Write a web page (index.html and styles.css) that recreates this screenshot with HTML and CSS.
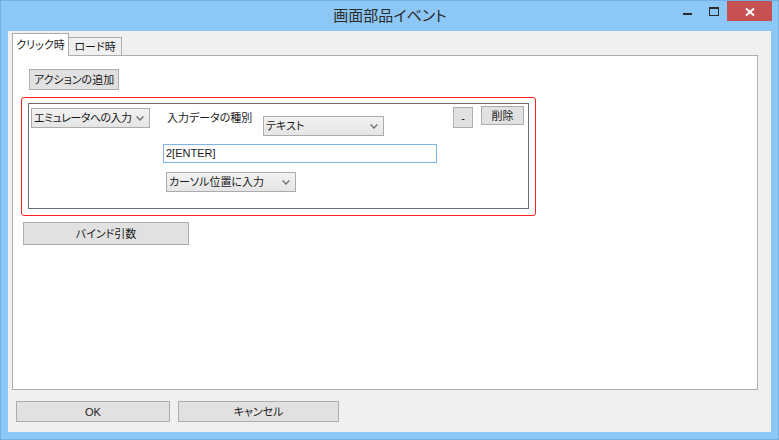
FILE: index.html
```html
<!DOCTYPE html>
<html lang="ja">
<head>
<meta charset="utf-8">
<title>画面部品イベント</title>
<link rel="stylesheet" href="styles.css">
</head>
<body>
<div class="window">
  <div class="titlebar">
    <div class="tb-left"></div>
    <div class="title">画面部品イベント</div>
    <div class="controls">
      <span class="ctl ctl-min"><svg width="26" height="20" viewBox="0 0 26 20"><rect x="9" y="12" width="9" height="2" fill="#2b2b2b"/></svg></span>
      <span class="ctl ctl-max"><svg width="27" height="20" viewBox="0 0 27 20"><rect x="9.5" y="6.5" width="9" height="8" fill="none" stroke="#2b2b2b"/><rect x="9" y="6" width="10" height="2" fill="#2b2b2b"/></svg></span>
      <span class="ctl ctl-close"><svg width="45" height="20" viewBox="0 0 45 20"><path d="M19 7.5 L27 14.5 M27 7.5 L19 14.5" stroke="#fff" stroke-width="2" fill="none"/></svg></span>
    </div>
  </div>
  <div class="client">
    <div class="tabs">
      <div class="tab active">クリック時</div>
      <div class="tab">ロード時</div>
    </div>
    <div class="panel">
      <div class="btn add">アクションの追加</div>
      <div class="action-outer">
        <div class="action-inner">
          <div class="row1">
            <div class="combo c1"><span class="ctext">エミュレータへの入力</span><svg class="arrow" width="8" height="5" viewBox="0 0 8 5"><path d="M0.6 0.6 L4 4 L7.4 0.6" stroke="#707070" stroke-width="1.4" fill="none"/></svg></div>
            <div class="label">入力データの種別</div>
            <div class="combo c2"><span class="ctext">テキスト</span><svg class="arrow" width="8" height="5" viewBox="0 0 8 5"><path d="M0.6 0.6 L4 4 L7.4 0.6" stroke="#707070" stroke-width="1.4" fill="none"/></svg></div>
            <div class="btn minus">-</div>
            <div class="btn del">削除</div>
          </div>
          <div class="textbox">2[ENTER]</div>
          <div class="combo c3"><span class="ctext">カーソル位置に入力</span><svg class="arrow" width="8" height="5" viewBox="0 0 8 5"><path d="M0.6 0.6 L4 4 L7.4 0.6" stroke="#707070" stroke-width="1.4" fill="none"/></svg></div>
        </div>
      </div>
      <div class="btn bind">バインド引数</div>
    </div>
    <div class="footer">
      <div class="btn ok">OK</div>
      <div class="btn cancel">キャンセル</div>
    </div>
  </div>
</div>
</body>
</html>
```
FILE: styles.css
```css
* { box-sizing: border-box; }
html, body { margin: 0; padding: 0; }
body {
  width: 779px;
  height: 440px;
  overflow: hidden;
  font-family: "Liberation Sans", "Noto Sans CJK JP", sans-serif;
  font-size: 11px;
  color: #1a1a1a;
  font-feature-settings: "palt";
}
.window {
  width: 779px;
  height: 440px;
  background: #8dc7f6;
  border: 1px solid #74aee6;
  padding: 0 7px 7px;
  display: flex;
  flex-direction: column;
}
.titlebar {
  height: 30px;
  margin-right: -1px;
  display: grid;
  grid-template-columns: 1fr auto 1fr;
  align-items: center;
}
.title {
  font-size: 15px;
  color: #2b2b2b;
  line-height: 20px;
}
.controls {
  justify-self: end;
  align-self: start;
  display: flex;
}
.ctl { display: block; height: 20px; }
.ctl svg { display: block; }
.ctl-close { background: #c75050; }
.client {
  flex: 1;
  background: #f0f0f0;
  padding: 2px 0 0 4px;
  display: flex;
  flex-direction: column;
  align-items: flex-start;
}
.tabs {
  height: 22px;
  display: flex;
  align-items: flex-end;
  position: relative;
  z-index: 1;
}
.tab {
  height: 18px;
  border: 1px solid #adadad;
  border-bottom: none;
  background: #f0f0f0;
  display: flex;
  align-items: center;
  justify-content: center;
  line-height: 16px;
  width: 54px;
  margin-left: -1px;
}
.tab.active {
  background: #fff;
  height: 23px;
  width: 57px;
  margin-left: 0;
  margin-bottom: -1px;
  padding-bottom: 1px;
  position: relative;
  z-index: 2;
}
.panel {
  width: 746px;
  height: 335px;
  background: #fff;
  border: 1px solid #adadad;
  display: flex;
  flex-direction: column;
  align-items: flex-start;
}
.btn {
  background: #e1e1e1;
  border: 1px solid #adadad;
  display: flex;
  align-items: center;
  justify-content: center;
  line-height: 14px;
  white-space: nowrap;
}
.add { margin: 13px 0 0 16px; width: 90px; height: 21px; }
.action-outer {
  margin: 7px 0 0 8px;
  width: 515px;
  height: 119px;
  border: 1px solid #ff2020;
  border-radius: 3px;
  padding: 5px 6px 6px;
}
.action-inner {
  width: 501px;
  height: 106px;
  border: 1px solid #6d6d6d;
  padding: 3px 4px 0 2px;
  display: flex;
  flex-direction: column;
  align-items: flex-start;
}
.row1 {
  align-self: stretch;
  height: 28px;
  display: flex;
  align-items: flex-start;
  padding-top: 1px;
}
.combo {
  height: 20px;
  background: linear-gradient(#f2f2f2, #e5e5e5);
  border: 1px solid #acacac;
  display: flex;
  align-items: center;
  padding-left: 2px;
  white-space: nowrap;
}
.ctext { line-height: 14px; }
.arrow { margin-left: auto; margin-right: 5px; display: block; flex: none; }
.c1 { width: 119px; }
.c1 .ctext { letter-spacing: -0.5px; }
.label { margin-left: 17px; width: 96px; height: 20px; line-height: 20px; white-space: nowrap; }
.c2 { width: 121px; margin-top: 8px; }
.minus { margin-left: auto; margin-top: -1px; width: 20px; height: 21px; }
.del { margin-left: 8px; margin-top: -2px; width: 43px; height: 19px; }
.textbox {
  margin: 9px 0 0 132px;
  width: 274px;
  height: 19px;
  border: 1px solid #7eb4ea;
  background: #fff;
  font-size: 11px;
  line-height: 17px;
  padding-left: 2px;
}
.c3 { width: 130px; margin: 9px 0 0 135px; padding-left: 2px; }
.bind { margin: 6px 0 0 10px; width: 166px; height: 23px; }
.footer {
  display: flex;
  margin: 11px 0 0 4px;
}
.ok { width: 154px; height: 21px; }
.cancel { width: 161px; height: 21px; margin-left: 8px; }
```
